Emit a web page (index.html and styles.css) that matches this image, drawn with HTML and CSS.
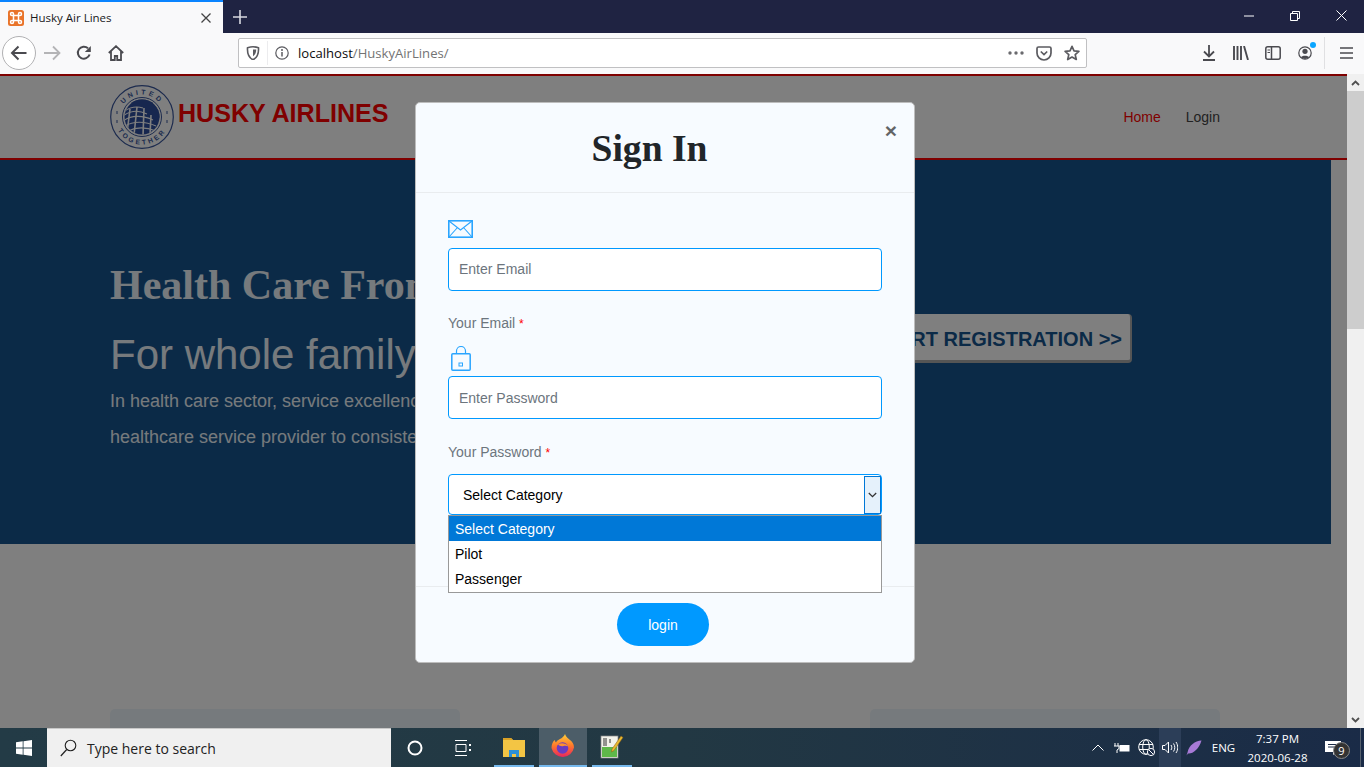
FILE: index.html
```html
<!DOCTYPE html>
<html lang="en">
<head>
<meta charset="utf-8">
<title>Husky Air Lines</title>
<link rel="stylesheet" href="styles.css">
</head>
<body>
<div class="tabstrip">
  <div class="tab">
    <svg class="favicon" width="16" height="16" viewBox="0 0 16 16"><rect width="16" height="16" rx="2.500" fill="#e9742a"/><path d="M5.500 5.500h5v5h-5zM5.500 5.500H4A1.500 1.500 0 1 1 5.500 4zM10.500 5.500H12A1.500 1.500 0 1 0 10.500 4zM5.500 10.500H4A1.500 1.500 0 1 0 5.500 12zM10.500 10.500H12A1.500 1.500 0 1 1 10.500 12z" fill="none" stroke="#fff" stroke-width="1.500"/></svg>
    <span class="tab-title">Husky Air Lines</span>
    <svg class="tab-close" width="12" height="12" viewBox="0 0 12 12"><path d="M1.500 1.500l9 9M10.500 1.500l-9 9" stroke="#444" stroke-width="1.300"/></svg>
  </div>
  <svg class="newtab" width="14" height="14" viewBox="0 0 14 14"><path d="M7 0v14M0 7h14" stroke="#d8d9e0" stroke-width="1.600"/></svg>
  <div class="winctl">
    <div class="winbtn"><svg width="10" height="10" viewBox="0 0 10 10"><path d="M0 5h10" stroke="#fff"/></svg></div>
    <div class="winbtn"><svg width="10" height="10" viewBox="0 0 10 10"><path d="M.5 2.500h7v7h-7zM2.500 2.500v-2h7v7h-2" fill="none" stroke="#fff"/></svg></div>
    <div class="winbtn"><svg width="11" height="11" viewBox="0 0 11 11"><path d="M.5.500l10 10M10.500.500l-10 10" stroke="#fff"/></svg></div>
  </div>
</div>

<div class="toolbar">
  <div class="backbtn"><svg width="18" height="18" viewBox="0 0 18 18"><path d="M16.500 9H2M8.500 2.500L2 9l6.500 6.500" fill="none" stroke="#4a4a4f" stroke-width="2"/></svg></div>
  <div class="toolcell"><svg width="17" height="16" viewBox="0 0 17 16"><path d="M0 8h15.500M9 1.500L15.500 8 9 14.500" fill="none" stroke="#b4b4b6" stroke-width="1.800"/></svg></div>
  <div class="toolcell"><svg width="16" height="16" viewBox="0 0 16 16"><path d="M13.600 9.500A6 6 0 1 1 12 3.300" fill="none" stroke="#4a4a4f" stroke-width="2"/><path d="M14.800 1v6h-6z" fill="#4a4a4f"/></svg></div>
  <div class="toolcell"><svg width="16" height="16" viewBox="0 0 16 16"><path d="M.8 8L8 1.200 15.200 8M3 6.500V15h3.800v-4h2.400v4H13V6.500" fill="none" stroke="#4a4a4f" stroke-width="1.800"/></svg></div>
  <div class="urlbar">
    <svg class="url-shield" width="14" height="14" viewBox="0 0 14 14"><path d="M1.500 1.800C4 1 5.500.800 7 .8s3 .200 5.500 1c.300 5-.700 9.500-5.500 12C2.200 11.300 1.200 6.800 1.500 1.800z" fill="none" stroke="#5b5b60" stroke-width="1.600"/><path d="M7 3.500h3.200c0 3-.800 5-3.200 6.800z" fill="#5b5b60"/></svg>
    <span class="url-sep"></span>
    <svg class="url-info" width="14" height="14" viewBox="0 0 14 14"><circle cx="7" cy="7" r="6.200" fill="none" stroke="#5b5b60" stroke-width="1.200"/><path d="M7 6v4.500" stroke="#5b5b60" stroke-width="1.500"/><circle cx="7" cy="3.900" r="1" fill="#5b5b60"/></svg>
    <span class="url-text"><span class="url-host">localhost</span>/HuskyAirLines/</span>
    <svg class="url-dots" width="16" height="4" viewBox="0 0 16 4"><circle cx="2" cy="2" r="1.700" fill="#6a6a6e"/><circle cx="8" cy="2" r="1.700" fill="#6a6a6e"/><circle cx="14" cy="2" r="1.700" fill="#6a6a6e"/></svg>
    <svg class="url-pocket" width="16" height="15" viewBox="0 0 16 15"><path d="M1 2.500C1 1.500 1.500 1 2.500 1h11c1 0 1.500.500 1.500 1.500V7A7 7 0 0 1 1 7z" fill="none" stroke="#5b5b60" stroke-width="1.700"/><path d="M4.800 5.500L8 8.500l3.200-3" fill="none" stroke="#5b5b60" stroke-width="1.700"/></svg>
    <svg class="url-star" width="16" height="16" viewBox="0 0 16 16"><path d="M8 1.300l2 4.500 4.900.5-3.700 3.300 1.100 4.900L8 12l-4.300 2.500 1.100-4.900L1.100 6.300 6 5.800z" fill="none" stroke="#5b5b60" stroke-width="1.700" stroke-linejoin="round"/></svg>
  </div>
  <div class="tool-right">
    <div class="toolcell"><svg width="14" height="16" viewBox="0 0 14 16"><path d="M7 0v11M2 6.500L7 11.500l5-5M1 15h12" fill="none" stroke="#4a4a4f" stroke-width="1.800"/></svg></div>
    <div class="toolcell"><svg width="16" height="14" viewBox="0 0 16 14"><path d="M1 0v14M4.500 0v14M8 0v14M11 0l4 14" fill="none" stroke="#4a4a4f" stroke-width="1.900"/></svg></div>
    <div class="toolcell"><svg width="16" height="14" viewBox="0 0 16 14"><rect x=".8" y=".8" width="14.400" height="12.400" rx="2" fill="none" stroke="#4a4a4f" stroke-width="1.500"/><path d="M6.500 1v12" stroke="#4a4a4f" stroke-width="1.500"/><path d="M2.500 4h2.500M2.500 6.500h2.500" stroke="#4a4a4f"/></svg></div>
    <div class="toolcell account"><svg width="14" height="14" viewBox="0 0 14 14"><circle cx="7" cy="7" r="6.200" fill="none" stroke="#4a4a4f" stroke-width="1.200"/><circle cx="7" cy="5.300" r="2.600" fill="#4a4a4f"/><path d="M2.800 11.500c.8-2.500 7.600-2.500 8.400 0L7 13z" fill="#4a4a4f"/></svg><span class="account-dot"></span></div>
    <span class="tool-sep"></span>
    <div class="toolcell"><svg width="13" height="12" viewBox="0 0 13 12"><path d="M0 1h13M0 6h13M0 11h13" stroke="#4a4a4f" stroke-width="1.600"/></svg></div>
  </div>
</div>

<div class="viewport">
  <div class="page">
    <header class="site-header">
      <svg class="logo" width="64" height="64" viewBox="0 0 64 64">
        <defs>
          <path id="arc-top" d="M9.500 32a22.500 22.500 0 0 1 45 0"/>
          <path id="arc-bottom" d="M4.500 32a27.500 27.500 0 0 0 55 0"/>
          <clipPath id="globe-clip"><circle cx="32" cy="32" r="17.500"/></clipPath>
        </defs>
        <circle cx="32" cy="32" r="31.300" fill="#fff" stroke="#38569c" stroke-width="1.200"/>
        <circle cx="32" cy="32" r="19.500" fill="none" stroke="#38569c"/>
        <text class="logo-text logo-top" text-anchor="middle"><textPath href="#arc-top" startOffset="50%">UNITED</textPath></text>
        <text class="logo-text logo-bottom" text-anchor="middle"><textPath href="#arc-bottom" startOffset="50%">TOGETHER</textPath></text>
        <g clip-path="url(#globe-clip)">
          <rect x="14" y="14" width="36" height="36" fill="#2f4f9e"/>
          <path d="M13 27c8-6 14-6 20-4M13 31c8-6 16-6 24-2M13 36c8-6 20-6 30-1M15 41c8-5 20-5 31 0M18 46c8-4 18-4 28 0" fill="none" stroke="#fff" stroke-width="1.100"/>
          <path d="M20 24l-3 24M27 22l-3 28M34 23l-1 28M41 30l-1 20" fill="none" stroke="#fff" stroke-width="1.600"/>
          <path d="M22 14h28v20C46 26 35 20 22 17z" fill="#2f4f9e"/>
        </g>
        <path d="M7 26v3M7 35v3M57 26v3M57 35v3" stroke="#38569c"/>
      </svg>
      <span class="brand">HUSKY AIRLINES</span>
      <nav class="site-nav">
        <a class="nav-home">Home</a>
        <a class="nav-login">Login</a>
      </nav>
    </header>
    <section class="hero">
      <div class="hero-text">
        <h1 class="hero-title">Health Care From Experts</h1>
        <p class="hero-sub">For whole family</p>
        <p class="hero-para">In health care sector, service excellence is the facility of the hospital as<br>healthcare service provider to consistently deliver care.</p>
      </div>
      <a class="hero-btn">START REGISTRATION &gt;&gt;</a>
    </section>
    <section class="cards">
      <div class="card"></div>
      <div class="card card-blank"></div>
      <div class="card"></div>
    </section>
  </div>
  <div class="scrollbar">
    <div class="sb-btn"><svg width="9" height="6" viewBox="0 0 9 6"><path d="M1 5l3.500-3.500L8 5" fill="none" stroke="#505050" stroke-width="1.800"/></svg></div>
    <div class="sb-thumb"></div>
    <div class="sb-track"></div>
    <div class="sb-btn"><svg width="9" height="6" viewBox="0 0 9 6"><path d="M1 1l3.500 3.500L8 1" fill="none" stroke="#505050" stroke-width="1.800"/></svg></div>
  </div>

  <div class="backdrop">
    <div class="modal">
      <div class="modal-head">
        <h2 class="modal-title">Sign In</h2>
        <span class="modal-close">×</span>
      </div>
      <div class="modal-body">
        <div class="icon-row icon-row-mail">
          <svg width="25" height="18" viewBox="0 0 25 18"><rect x=".8" y=".8" width="23.400" height="16.400" fill="none" stroke="#2aa5ff" stroke-width="1.600"/><path d="M1 1l11.500 9L24 1M1 17l8.500-9.500M24 17l-8.500-9.500" fill="none" stroke="#2aa5ff" stroke-width="1.100"/></svg>
        </div>
        <div class="field">Enter Email</div>
        <div class="label label-email">Your Email <span class="req">*</span></div>
        <div class="icon-row icon-row-lock">
          <svg width="20" height="25" viewBox="0 0 20 25"><rect x=".8" y="7.800" width="18.400" height="16.400" rx="1" fill="none" stroke="#2aa5ff" stroke-width="1.500"/><path d="M5.500 7.500V5a4.500 4.500 0 0 1 9 0v2.500" fill="none" stroke="#2aa5ff" stroke-width="1.200"/><rect x="8" y="17" width="3.500" height="3" fill="none" stroke="#2aa5ff"/></svg>
        </div>
        <div class="field field-pass">Enter Password</div>
        <div class="label label-pass">Your Password <span class="req">*</span></div>
        <div class="select">
          <span class="select-value">Select Category</span>
          <span class="select-arrow"><svg width="9" height="6" viewBox="0 0 9 6"><path d="M.8 1l3.700 3.700L8.200 1" fill="none" stroke="#333" stroke-width="1.300"/></svg></span>
          <ul class="listbox">
            <li class="option option-active">Select Category</li>
            <li class="option">Pilot</li>
            <li class="option">Passenger</li>
          </ul>
        </div>
      </div>
      <div class="modal-foot">
        <a class="login-btn">login</a>
      </div>
    </div>
  </div>
</div>

<footer class="taskbar">
  <div class="start"><svg width="16" height="16" viewBox="0 0 16 16"><path d="M0 2.300l6.700-1v6.300H0zM7.500 1.200L16 0v7.600H7.500zM0 8.400h6.700v6.300l-6.700-1zM7.500 8.400H16V16l-8.500-1.200z" fill="#fff"/></svg></div>
  <div class="search">
    <svg width="17" height="18" viewBox="0 0 17 18"><circle cx="10.500" cy="6.500" r="5.300" fill="none" stroke="#222" stroke-width="1.100"/><path d="M6.700 10.500L.8 17" stroke="#222" stroke-width="1.200"/></svg>
    <span class="search-text">Type here to search</span>
  </div>
  <div class="task task-plain"><svg width="16" height="16" viewBox="0 0 16 16"><circle cx="8" cy="8" r="6.500" fill="none" stroke="#fff" stroke-width="2"/></svg></div>
  <div class="task task-plain"><svg width="16" height="16" viewBox="0 0 16 16"><path d="M0 .5h12M0 15.500h12M1 4.500h10v7H1z" fill="none" stroke="#fff"/><path d="M14 4h2v2h-2zM14 9h2v2h-2z" fill="#fff"/></svg></div>
  <div class="task task-app task-explorer">
    <svg width="22" height="20" viewBox="0 0 22 20"><path d="M0 1h8l2 2h12v17H0z" fill="#f3c544"/><path d="M0 1h8l2 2H0z" fill="#d9a126"/><path d="M6 20v-7h10v7h-3v-3H9v3z" fill="#2d8fd5"/></svg>
  </div>
  <div class="task task-app task-firefox">
    <svg width="24" height="25" viewBox="0 0 24 25"><defs><linearGradient id="fx" x1="0" y1="0" x2="0" y2="1"><stop offset="0" stop-color="#ffcf3a"/><stop offset=".5" stop-color="#ff7a2a"/><stop offset="1" stop-color="#e8265e"/></linearGradient></defs><path d="M14 0c1 3 3 4 5 6 2 1.500 4 4 4 7.500A11.500 11.500 0 0 1 .5 14C.5 10 2 7 4 6c0 1.500.5 2 1 2.500C6 6 8 6 9 5c2-1 4-2.500 5-5z" fill="url(#fx)"/><circle cx="11.500" cy="14" r="5.800" fill="#6a3bc0"/><path d="M7 10.500c3-2 8-1.500 10.500 2-2-1-3.500-1-5-.5-2 .5-4 0-5.500-1.500z" fill="#ff9130"/></svg>
  </div>
  <div class="task task-app task-notes">
    <svg width="24" height="25" viewBox="0 0 24 25"><rect x="1" y="2" width="17" height="22" fill="#f2f2ea" stroke="#888" stroke-width=".7"/><rect x="2" y="13" width="15" height="10" fill="#5fb84a"/><path d="M4 4v8M6 4v8M9 6h2M9 8h2" stroke="#333"/><path d="M21 2l2 1.500-9 13-2.500 1.500.5-3z" fill="#e8b92f" stroke="#8a5a14" stroke-width=".5"/></svg>
  </div>
  <div class="tray">
    <div class="tray-cell tray-chevron"><svg width="12" height="7" viewBox="0 0 12 7"><path d="M.5 6.500L6 1l5.500 5.500" fill="none" stroke="#fff"/></svg></div>
    <div class="tray-cell tray-battery"><svg width="16" height="12" viewBox="0 0 16 12"><path d="M1 1v3M4 1v3M0 4h5v2.500L3 8v3" fill="none" stroke="#fff"/><rect x="5.500" y="3" width="10" height="6.500" fill="#fff"/></svg></div>
    <div class="tray-cell tray-globe"><svg width="17" height="17" viewBox="0 0 17 17"><circle cx="8" cy="8" r="7.300" fill="none" stroke="#fff"/><ellipse cx="8" cy="8" rx="3.300" ry="7.300" fill="none" stroke="#fff"/><path d="M1 5.500h14M1 10.500h14" stroke="#fff"/><circle cx="13" cy="13" r="3.600" fill="#1a2b47" stroke="#fff"/><path d="M10.800 10.800l4.400 4.400" stroke="#fff"/></svg></div>
    <div class="tray-cell tray-volume"><svg width="16" height="13" viewBox="0 0 16 13"><path d="M.5 4.500h2.500l3.500-3.500v11L3 8.500H.5z" fill="none" stroke="#fff"/><path d="M9 4c1 1.500 1 3.500 0 5M11.500 2.500c1.700 2.500 1.700 5.500 0 8M14 1c2.300 3.500 2.300 7.500 0 11" fill="none" stroke="#fff"/></svg></div>
    <div class="tray-cell tray-feather"><svg width="16" height="16" viewBox="0 0 16 16"><path d="M15.500.5C9 1 3 5 1.500 12.500L.5 15.500l1.500-2C7 14 13 9 15.500.5z" fill="#a77ad6"/></svg></div>
    <div class="tray-cell tray-lang">ENG</div>
    <div class="tray-cell tray-clock"><span>7:37 PM</span><span>2020-06-28</span></div>
    <div class="tray-cell tray-notif"><svg width="16" height="14" viewBox="0 0 16 14"><path d="M0 0h16v11h-5l-3 3v-3H0z" fill="#fff"/><path d="M3 3.500h10M3 6h10" stroke="#1a2b47"/></svg><span class="notif-badge">9</span></div>
    <div class="tray-cell tray-desktop"></div>
  </div>
</footer>
</body>
</html>
```
FILE: styles.css
```css
* { box-sizing: border-box; }
html, body { margin: 0; padding: 0; }
body {
  width: 1364px;
  height: 767px;
  overflow: hidden;
  display: flex;
  flex-direction: column;
  font-family: "Liberation Sans", Arial, sans-serif;
  font-size: 14px;
  background: #fff;
}
svg { display: block; flex: none; }

/* browser chrome */
.tabstrip { height: 33px; background: #1f2342; display: flex; align-items: stretch; flex: none; }
.tab {
  width: 223px;
  background: #f9f9fa;
  border-top: 2px solid #0a84ff;
  display: flex;
  align-items: center;
  padding: 0 11px 0 8px;
}
.tab-title { margin-left: 6px; flex: 1; font: 11.500px "Open Sans", sans-serif; color: #18181a; }
.newtab { align-self: center; margin-left: 10px; }
.winctl { margin-left: auto; display: flex; }
.winbtn { width: 46px; display: flex; align-items: center; justify-content: center; padding-bottom: 2px; }

.toolbar { height: 41px; background: #f9f9fa; display: flex; align-items: center; flex: none; padding-left: 2px; padding-bottom: 1px; }
.backbtn {
  width: 34px; height: 34px; border-radius: 50%; border: 1px solid #b1b1b3; background: #fff;
  display: flex; align-items: center; justify-content: center;
}
.toolcell { width: 32px; height: 32px; display: flex; align-items: center; justify-content: center; position: relative; }
.urlbar {
  width: 849px; height: 30px; margin-left: 106px; background: #fff;
  border: 1px solid #c0c0c2; border-radius: 2px;
  display: flex; align-items: center; padding-left: 7px;
}
.url-sep { width: 1px; height: 24px; background: #ececee; margin-left: 7px; }
.url-info { margin-left: 7px; }
.url-text { margin-left: 9px; flex: 1; font: 13.100px "Open Sans", sans-serif; color: #737373; }
.url-host { color: #0c0c0d; }
.url-pocket { margin-left: 12px; }
.url-star { margin-left: 12px; margin-right: 6px; }
.tool-right { margin-left: 106px; display: flex; align-items: center; }
.account-dot { position: absolute; top: 5px; right: 5px; width: 6px; height: 6px; border-radius: 50%; background: #0aa5ff; }
.tool-sep { width: 1px; height: 32px; background: #e0e0e2; margin: 0 5px 0 3px; }

/* page */
.viewport { position: relative; height: 654px; display: flex; flex: none; }
.page { width: 1347px; height: 654px; overflow: hidden; background: #fff; flex: none; }
.site-header {
  height: 86px;
  border-top: 2px solid #ff0000;
  border-bottom: 2px solid #ff0000;
  display: flex;
  align-items: center;
  padding: 0 127px 0 110px;
}
.logo-text { font: bold 6.800px "Liberation Sans", sans-serif; fill: #38569c; }
.logo-top { letter-spacing: 3px; }
.logo-bottom { letter-spacing: 2.600px; }
.brand { margin-left: 4px; font-size: 25.100px; font-weight: bold; color: #f00; margin-top: -8px; }
.site-nav { margin-left: auto; display: flex; gap: 25px; }
.nav-home { color: #f00; }
.nav-login { color: #444; }

.hero { width: 1331px; height: 384px; background: #16548e; display: flex; align-items: flex-start; padding-left: 110px; }
.hero-text { width: 660px; padding-top: 103px; color: #edf5fa; }
.hero-title { margin: 0; font: bold 42px/44px "Liberation Serif", serif; white-space: nowrap; }
.hero-sub { margin: 26px 0 0; font-size: 42px; line-height: 44px; }
.hero-para { margin: 6px 0 0; font-size: 18px; line-height: 36px; white-space: nowrap; }
.hero-btn {
  margin: 154px 199px 0 auto;
  height: 49px;
  padding: 0 8px 0 10px;
  background: #fff;
  border-right: 2px solid #aaa;
  border-bottom: 3px solid #aaa;
  border-radius: 4px;
  color: #16548e;
  font-size: 20px;
  font-weight: bold;
  line-height: 50px;
  white-space: nowrap;
}
.cards { width: 1331px; padding: 165px 111px 0 110px; display: flex; justify-content: space-between; }
.card { width: 350px; height: 120px; background: #edf5fa; border-radius: 5px; }
.card-blank { background: #fff; }

.scrollbar { width: 17px; flex: none; display: flex; flex-direction: column; background: #f0f0f0; }
.sb-btn { height: 17px; display: flex; align-items: center; justify-content: center; flex: none; }
.sb-thumb { height: 238px; background: #cdcdcd; flex: none; }
.sb-track { flex: 1; }

/* modal */
.backdrop {
  position: absolute;
  top: 0; left: 0;
  width: 1347px;
  height: 654px;
  background: rgba(0, 0, 0, .5);
  display: flex;
  justify-content: center;
  align-items: flex-start;
  padding: 28px 17px 0 0;
}
.modal {
  width: 500px;
  height: 561px;
  background: #f7fbff;
  border: 1px solid #bdbdbd;
  border-radius: 5px;
  display: flex;
  flex-direction: column;
  color: #212529;
}
.modal-head { height: 90px; display: flex; border-bottom: 1px solid #e9ecef; padding: 0 16px; flex: none; }
.modal-title { flex: 1; margin: 0; text-align: center; font: bold 37.600px/92px "Liberation Serif", serif; }
.modal-close { width: 31px; padding-right: 1px; text-align: right; font-size: 21px; font-weight: bold; line-height: 56px; color: #000; opacity: .6; }
.modal-body { flex: 1; padding: 26px 32px 0 32px; }
.icon-row { display: flex; }
.icon-row-mail { height: 29px; align-items: flex-end; padding-bottom: 10px; }
.icon-row-lock { height: 30px; padding: 0 0 0 3px; margin-top: 13px; }
.field {
  height: 43px;
  background: #fff;
  border: 1px solid #0099ff;
  border-radius: 4px;
  padding-left: 10px;
  line-height: 41px;
  color: #6c757d;
}
.field-pass { line-height: 42px; }
.label { height: 20px; line-height: 20px; color: #6c757d; }
.label-email { margin-top: 22px; }
.label-pass { margin-top: 23px; }
.req { color: #f00; font-size: 12px; }
.select {
  position: relative;
  height: 41px;
  margin-top: 12px;
  background: #fff;
  border: 1px solid #0099ff;
  border-radius: 4px;
  display: flex;
  align-items: center;
  color: #000;
  padding-left: 14px;
}
.select-value { flex: 1; }
.select-arrow {
  width: 17px; height: 38px; background: #e5f1fb; border: 1px solid #0078d7;
  display: flex; align-items: center; justify-content: center;
}
.listbox {
  position: absolute;
  top: 40px; left: -1px; right: -1px;
  margin: 0; padding: 0;
  list-style: none;
  background: #fff;
  border: 1px solid #999;
  height: 78px;
}
.option { height: 25px; line-height: 26px; padding-left: 6px; color: #000; }
.option-active { background: #0078d7; color: #fff; }
.modal-foot { height: 76px; border-top: 1px solid #e9ecef; display: flex; justify-content: center; padding: 16px 4px 0 0; flex: none; }
.login-btn { width: 92px; height: 43px; border-radius: 22px; background: #0099ff; color: #fff; text-align: center; line-height: 44px; }

/* taskbar */
.taskbar { height: 39px; flex: none; display: flex; background: linear-gradient(90deg, #233b46 0%, #223843 50%, #1a2b47 100%); color: #fff; font-family: "Open Sans", sans-serif; }
.start { width: 47px; display: flex; align-items: center; justify-content: center; }
.search { width: 344px; background: #f0f0f0; border-top: 1px solid #c8c8c8; display: flex; align-items: center; padding-left: 13px; color: #222; }
.search-text { margin-left: 10px; font-size: 14px; }
.task { display: flex; align-items: center; justify-content: center; }
.task-plain { width: 48px; }
.task-app { width: 40px; margin: 0 3px; border-bottom: 2px solid #76b9ed; }
.task-explorer { margin-left: 7px; }
.task-firefox { width: 48px; background: #4c5d68; margin: 0 2px; }
.task-notes { margin-left: 3px; }
.tray { margin-left: auto; display: flex; align-items: center; height: 100%; }
.tray-cell { height: 100%; display: flex; align-items: center; justify-content: center; position: relative; }
.tray-chevron { width: 25px; }
.tray-battery { width: 24px; }
.tray-globe { width: 25px; }
.tray-volume { width: 22px; background: #2c3e58; }
.tray-feather { width: 26px; }
.tray-lang { width: 33px; font-size: 11.500px; }
.tray-clock { width: 75px; flex-direction: column; font-size: 11.500px; line-height: 19px; }
.tray-notif { width: 35px; }
.notif-badge {
  position: absolute; left: 18px; top: 14px; width: 17px; height: 17px; border-radius: 50%;
  background: #333; border: 1px solid #888; color: #fff; font-size: 11px; line-height: 15px; text-align: center;
}
.tray-desktop { width: 4px; border-left: 1px solid #55606e; margin-left: 10px; }
```
